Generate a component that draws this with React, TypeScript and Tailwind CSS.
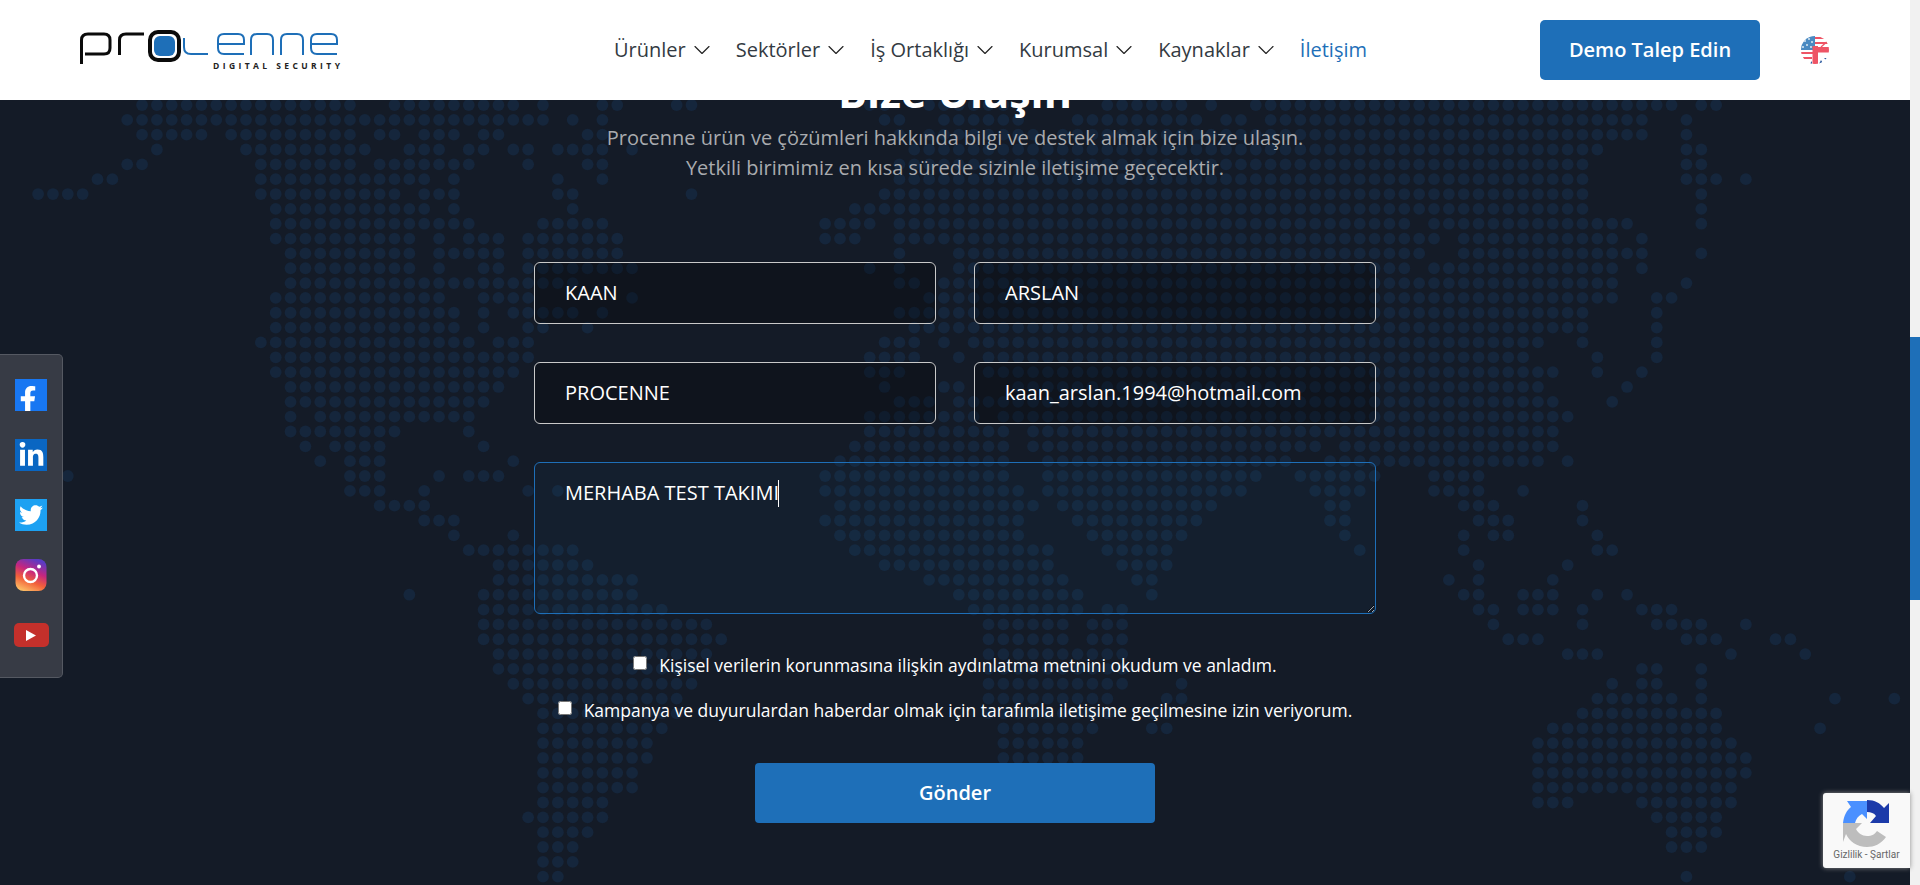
import { ChevronDown } from 'lucide-react';
import { FaFacebookF, FaLinkedinIn, FaTwitter } from 'react-icons/fa';

// world map dots, one string per row, column ranges
const mapRows = [
  '9-23 26-34 36 40-41 45-46 58-59 62-67 74-79 81 84-112 114-115',
  '8-36 38 40 59-60 63-68 72-80 82-83 85-110 113',
  '9-13 15-23 25-26 28-30 32-33 39-40 60 62-69 71-110 113',
  '10 16-24 27-29 31-32 34-35 37-40 42 61-107 113-114',
  '8-9 17-23 25-31 35 39-40 60-106 113-114',
  '6-7 17-28 30 37 40 60-106 113-115 117',
  '2-5 17-26 28-30 37-38 46 59-106 114',
  '18-28 30 38 57-106 114',
  '18-31 36-40 55-58 60-94 96-109 114',
  '18-27 29 31-33 35-41 55-57 60-96 98-108 110',
  '19-27 29-33 35-41 60 64-95 98-110 114',
  '19-27 29 32-33 35-42 58 60 64-94 96-108 110',
  '19-38 60-61 63-108 113',
  '18-29 32-35 42 62-108 111-112',
  '18-30 32 34-38 40 60-106 111',
  '18-30 32 35-36 39 61-106 111',
  '17-31 33-35 59-61 63 65-103 106 111',
  '18-35 58-61 64 66-102 107 111',
  '18-34 58-60 66-104 107 110',
  '19-33 59 63-64 68-103 109',
  '19-32 60-62 64-104 108',
  '19 21-31 58-65 67-105',
  '19-26 31 58-67 69-104',
  '20 22-25 32 57-67 69-88 90-104',
  '3 21 23-25 34 56-67 70-86 89-103 105',
  '4 23-25 29 31-33 55-67 70-84 87-92 96-99',
  '23-25 28 35 37 55-68 70-83 88-91 96-99 102',
  '25-28 56-69 71-81 89-90 98-100 106',
  '28-30 55-68 72-80 89-90 99-101 106',
  '30 34 56-68 73-79 90 98 100-101 107',
  '31-38 57-70 74-78 91 98 107-108',
  '33-39 59-70 75-78 99 105',
  '33-42 62-71 76-77 97 99 104',
  '27 32-42 64-72 77 98-99 102-104 107 109',
  '32-44 65-72 74-75 99-100 102-104 106 110-112',
  '32-47 66-71 73-75 100 106 111-114 117',
  '32-48 66-71 73-75 101-103 113-115 119-120',
  '33-47 66-75 105-107 116 121',
  '33-46 66-75 110-111 114',
  '34-46 66-75 79 108 110-111 114',
  '35-45 66-74 78-79 107-112 114 123 127',
  '36-45 66-74 77-78 106-115',
  '36-44 67-73 77-78 104-115 122',
  '36-43 67-72 103-116',
  '36-43 67-72 103-117',
  '36-42 68-71 103-117',
  '36-42 103-116',
  '36-40 103-105 110-116',
  '35-40 111-115',
  '36-39 112-115',
  '36-38 112-114',
  '36-38',
  '36-37 113 124',
];

const navItems = ['Ürünler', 'Sektörler', 'İş Ortaklığı', 'Kurumsal', 'Kaynaklar'];

function WorldMap() {
  const dots: { x: number; y: number }[] = [];
  mapRows.forEach((row, r) => {
    row.split(' ').forEach(range => {
      const [from, to] = range.split('-').map(Number);
      for (let c = from; c <= (to ?? from); c++) {
        dots.push({ x: 8.4 + 14.85 * c, y: 105 + 14.84 * r });
      }
    });
  });
  return (
    <svg className="absolute inset-0" width="1910" height="885" fill="#15263c">
      {dots.map(d => (
        <circle key={`${d.x}-${d.y}`} cx={d.x} cy={d.y} r="5.9" />
      ))}
    </svg>
  );
}

function Logo() {
  return (
    <svg width="262" height="42" viewBox="0 0 262 42" fill="none" className="shrink-0">
      <g stroke="#0b0b0b" strokeWidth="3">
        <path d="M1.5 35V11Q1.5 5 8 5H24Q30 5 30 11V19Q30 25 24 25H5" />
        <path d="M39.5 26V11Q39.5 5 46 5H64" />
        <rect x="70" y="3" width="29" height="28" rx="8" strokeWidth="4" />
      </g>
      <rect x="74" y="7" width="21" height="20" rx="6" fill="#1e6fb8" />
      <g stroke="#1e6fb8" strokeWidth="2">
        <path d="M104 9V18Q104 25 111 25H128" />
        <path d="M138 15H164V11Q164 5 158 5H144Q138 5 138 11V19Q138 25 144 25H164" />
        <path d="M171 26V11Q171 5 177 5H187Q193 5 193 11V26" />
        <path d="M201 26V11Q201 5 207 5H217Q223 5 223 11V26" />
        <path d="M231 15H257V11Q257 5 251 5H237Q231 5 231 11V19Q231 25 237 25H257" />
      </g>
      <text x="133" y="40" fill="#222" fontSize="8.5" fontWeight="700" textLength="127" fontFamily="Open Sans, sans-serif">
        DIGITAL SECURITY
      </text>
    </svg>
  );
}

function Flag() {
  return (
    <svg width="30" height="30" viewBox="0 0 30 30" className="shrink-0">
      <defs>
        <clipPath id="flag-circle">
          <circle cx="15" cy="15" r="14" />
        </clipPath>
      </defs>
      <g clipPath="url(#flag-circle)">
        <rect width="30" height="30" fill="#fff" />
        <g fill="#ee5465">
          <rect x="15" y="2" width="12" height="2" />
          <rect x="15" y="7" width="14" height="2" />
          <rect y="17" width="14" height="2" />
          <rect y="22" width="12" height="2" />
        </g>
        <rect width="15" height="15" fill="#4a8ac2" />
        <g fill="#dbe8f3">
          <circle cx="5" cy="6" r="1" />
          <circle cx="9" cy="4" r="1" />
          <circle cx="12" cy="7" r="1" />
          <circle cx="7" cy="10" r="1" />
          <circle cx="3" cy="12" r="1" />
          <circle cx="11" cy="12" r="1" />
        </g>
        <path d="M18.5 30L21 25L24 30ZM9 30L12 30L12 26ZM27 26L24 23L29 23Z" fill="#2d5a9e" />
        <path d="M21 12L30 4" stroke="#ee5465" strokeWidth="1.4" />
        <rect x="12.5" y="11" width="5.5" height="19" fill="#ee5465" />
        <rect x="13" y="12" width="17" height="5.5" fill="#ee5465" />
      </g>
    </svg>
  );
}

function SocialBar() {
  return (
    <div className="absolute left-0 top-[354px] z-10 flex w-[63px] flex-col items-center gap-7 rounded-r-[5px] border border-l-0 border-[#555962] bg-[#373b45] pb-[26px] pt-6">
      <div className="flex size-8 items-end justify-end overflow-hidden bg-[#1877f2] pr-1.5 text-white">
        <FaFacebookF size={27} className="-mb-0.5" />
      </div>
      <div className="flex size-8 items-center justify-center bg-[#0a66c2] text-white">
        <FaLinkedinIn size={27} />
      </div>
      <div className="flex size-8 items-center justify-center bg-[#1da1f2] text-white">
        <FaTwitter size={24} />
      </div>
      <svg width="32" height="32" viewBox="0 0 32 32">
        <defs>
          <linearGradient id="insta" x1="0.2" y1="1" x2="0.6" y2="0">
            <stop offset="0" stopColor="#fdc468" />
            <stop offset="0.35" stopColor="#f2613a" />
            <stop offset="0.65" stopColor="#c5267f" />
            <stop offset="1" stopColor="#5b3bc4" />
          </linearGradient>
        </defs>
        <rect x="0.5" width="31" height="32" rx="8" fill="url(#insta)" />
        <circle cx="15.5" cy="16.5" r="6.5" fill="none" stroke="#fff" strokeWidth="2.4" />
        <circle cx="24" cy="7.5" r="1.9" fill="#fff" />
      </svg>
      <div className="flex size-8 items-center justify-center">
        <div className="flex h-6 w-[35px] shrink-0 items-center justify-center rounded-[5px] bg-[#c4302b]">
          <svg width="10" height="11" viewBox="0 0 10 11">
            <path d="M0 0L10 5.5L0 11Z" fill="#fff" />
          </svg>
        </div>
      </div>
    </div>
  );
}

function Recaptcha() {
  return (
    <div className="absolute bottom-[17px] right-0 z-10 flex h-[75px] w-[87px] flex-col items-center rounded-l-[3px] bg-[#f9f9f9] pt-[7px] shadow-[0_0_5px_#8a8a8a]">
      <svg width="48" height="48" viewBox="0 0 48 48">
        <path d="M24 0C32 0 37 3 41 8L46 3V23H27L33 16C31 13 28 12 24 12Z" fill="#1c3aa9" />
        <path d="M0 23C1 15 4 10 8 7L4 1H24V19L19 14C15 16 13 19 12 23Z" fill="#4a90ff" />
        <path d="M0 23H19L13 29C15 33 19 36 24 36C29 36 32 34 34 31L43 37C38 44 31 47 24 47C14 47 6 41 3 34L0 42Z" fill="#bdbdbd" />
      </svg>
      <span className="mt-[1px] whitespace-nowrap font-['Roboto',sans-serif] text-[10px] leading-3 text-[#666]">Gizlilik - Şartlar</span>
    </div>
  );
}

const inputClass =
  'h-[62px] w-[402px] rounded-md border border-[#c9c9c9] bg-black/25 px-[30px] pb-px text-xl text-white outline-none';

export default function App() {
  return (
    <div className="flex h-[885px] w-full overflow-hidden bg-[#141b27] font-['Open_Sans',sans-serif]">
      <div className="relative h-full w-[1910px] shrink-0">
        <WorldMap />

        <header className="absolute inset-x-0 top-0 z-20 flex h-[100px] items-center bg-white pl-20 pr-[80px]">
          <Logo />
          <nav className="ml-[272px] flex items-center gap-[26px] text-xl text-[#333a42]">
            {navItems.map(item => (
              <a key={item} className="flex items-center gap-2 whitespace-nowrap">
                {item}
                <ChevronDown size={28} strokeWidth={1} className="-mx-[6px] text-[#222]" />
              </a>
            ))}
            <a className="text-[#1e6fb8]">İletişim</a>
          </nav>
          <button className="ml-auto flex h-[60px] w-[220px] items-center justify-center rounded-[5px] bg-[#1e6fb8] text-xl font-semibold text-white">
            Demo Talep Edin
          </button>
          <div className="ml-10">
            <Flag />
          </div>
        </header>

        <SocialBar />
        <Recaptcha />

        <main className="relative flex flex-col items-center pt-[70px]">
          <h1 className="text-[43px] font-bold leading-[43px] text-white">Bize Ulaşın</h1>
          <p className="mt-2.5 text-center text-xl leading-[30px] text-[#a9abaf]">
            Procenne ürün ve çözümleri hakkında bilgi ve destek almak için bize ulaşın.
            <br />
            Yetkili birimimiz en kısa sürede sizinle iletişime geçecektir.
          </p>

          <form className="mt-[79px] flex w-[842px] flex-col items-center">
            <div className="grid grid-cols-2 gap-x-[38px] gap-y-[38px]">
              <input className={inputClass} defaultValue="KAAN" readOnly />
              <input className={inputClass} defaultValue="ARSLAN" readOnly />
              <input className={inputClass} defaultValue="PROCENNE" readOnly />
              <input className={inputClass} defaultValue="kaan_arslan.1994@hotmail.com" readOnly />
            </div>
            <div className="relative mt-[38px] flex w-full">
              <textarea
                className="h-[152px] w-full rounded-md border border-[#1e6fb8] bg-[#1e6fb8]/5 px-[30px] py-4 text-xl leading-[28px] text-white outline-none"
                defaultValue="MERHABA TEST TAKIMI"
                readOnly
              />
              <span className="absolute left-[244px] top-[18px] h-[27px] w-px bg-white" />
            </div>
            <label className="mt-[39px] flex items-center gap-3 text-[17.5px] leading-6 text-white">
              <input type="checkbox" className="mb-1 size-[14px]" />
              Kişisel verilerin korunmasına ilişkin aydınlatma metnini okudum ve anladım.
            </label>
            <label className="mt-[21px] flex items-center gap-3 text-[17.5px] leading-6 text-white">
              <input type="checkbox" className="mb-1 size-[14px]" />
              Kampanya ve duyurulardan haberdar olmak için tarafımla iletişime geçilmesine izin veriyorum.
            </label>
            <button type="button" className="mt-[41px] h-[60px] w-[400px] rounded-[4px] bg-[#1e6fb8] text-xl font-semibold text-white">
              Gönder
            </button>
          </form>
        </main>
      </div>

      <div className="flex h-full w-[10px] shrink-0 flex-col bg-[#f1f1f1]">
        <div className="mt-[337px] h-[263px] w-full shrink-0 bg-[#1e6fb8]" />
      </div>
    </div>
  );
}
